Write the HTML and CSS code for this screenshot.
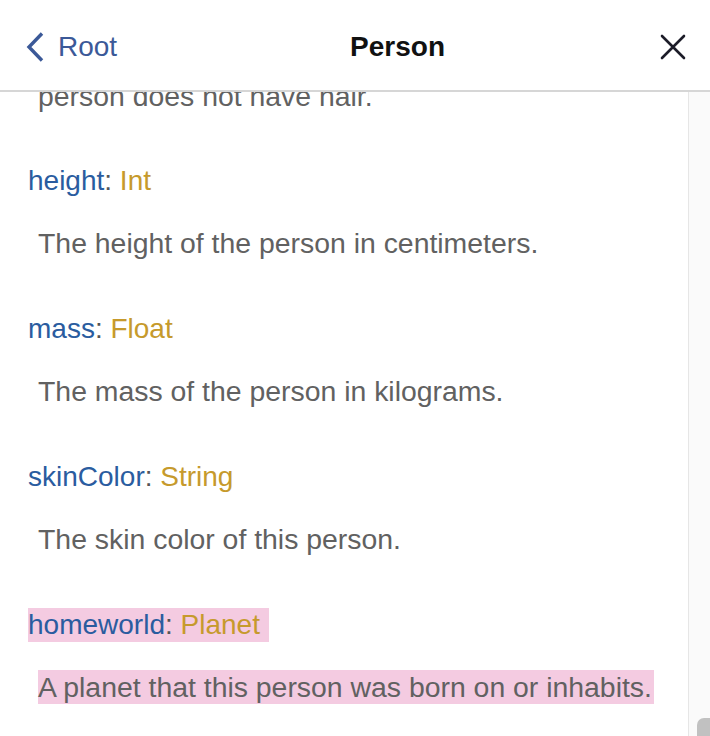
FILE: index.html
```html
<!DOCTYPE html>
<html>
<head>
<meta charset="utf-8">
<link rel="stylesheet" href="styles.css">
</head>
<body>
<div class="panel">
  <div class="titlebar">
    <a class="back">
      <svg class="chev" width="20" height="30" viewBox="0 0 20 30"><path d="M17 1.5 L4 15 L17 28.5" fill="none" stroke="#3b5998" stroke-width="3.4"/></svg>
      <span>Root</span>
    </a>
    <div class="title">Person</div>
    <div class="close">
      <svg width="26" height="26" viewBox="0 0 26 26"><path d="M2 2 L24 24 M24 2 L2 24" stroke="#1c1c28" stroke-width="2.6" stroke-linecap="round"/></svg>
    </div>
  </div>
  <div class="body">
    <div class="content">
      <div class="inner">
        <div class="desc first">person does not have hair.</div>
        <div class="field">
          <div class="fname"><span class="lbl"><span class="fn">height</span><span class="colon">: </span><span class="ty">Int</span></span></div>
          <div class="desc">The height of the person in centimeters.</div>
        </div>
        <div class="field">
          <div class="fname"><span class="lbl"><span class="fn">mass</span><span class="colon">: </span><span class="ty">Float</span></span></div>
          <div class="desc">The mass of the person in kilograms.</div>
        </div>
        <div class="field">
          <div class="fname"><span class="lbl"><span class="fn">skinColor</span><span class="colon">: </span><span class="ty">String</span></span></div>
          <div class="desc">The skin color of this person.</div>
        </div>
        <div class="field hl">
          <div class="fname"><span class="lbl"><span class="fn">homeworld</span><span class="colon">: </span><span class="ty">Planet</span></span></div>
          <div class="desc"><span class="dtext">A planet that this person was born on or inhabits.</span></div>
        </div>
      </div>
    </div>
    <div class="track"><div class="thumb"></div></div>
  </div>
</div>
</body>
</html>
```
FILE: styles.css
```css
html, body {
  margin: 0;
  padding: 0;
  background: #fff;
}
body {
  font-family: "Liberation Sans", Arial, sans-serif;
  width: 710px;
  height: 736px;
  overflow: hidden;
}
.panel {
  display: flex;
  flex-direction: column;
  height: 736px;
}
.titlebar {
  flex: none;
  display: flex;
  align-items: center;
  border-bottom: 2px solid #d6d6d6;
  padding: 4px 24px 0 25px;
  box-sizing: border-box;
  height: 92px;
}
.back {
  display: flex;
  align-items: center;
  color: #3b5998;
  font-size: 28px;
  gap: 13px;
}
.chev { display: block; }
.title {
  flex: 1;
  text-align: center;
  font-size: 28px;
  font-weight: bold;
  color: #111;
  padding-left: 18px;
}
.close {
  display: flex;
  align-items: center;
  width: 26px;
  height: 26px;
}
.close svg { display: block; }
.body {
  flex: 1;
  display: flex;
  overflow: hidden;
}
.content {
  flex: 1;
  overflow: hidden;
  padding-left: 28px;
}
.inner {
  margin-top: -13px;
}
.desc {
  font-size: 28.4px;
  line-height: 34px;
  color: #616161;
  margin-left: 10px;
}
.first { margin-bottom: 51px; }
.field { margin-bottom: 52px; }
.field .desc { margin-top: 28px; }
.fname {
  font-size: 28px;
  line-height: 34px;
}
.lbl { display: inline-block; padding-right: 9px; }
.fn { color: #2a5c9f; }
.colon { color: #555; }
.ty { color: #c69a2c; }
.hl .lbl { background: #f4cbe1; }
.dtext { display: inline-block; }
.hl .dtext { background: #f4cbe1; padding-right: 2px; }
.track {
  width: 21px;
  flex: none;
  background: #fafafa;
  border-left: 1px solid #e6e6e6;
  display: flex;
  flex-direction: column;
}
.thumb {
  margin-top: auto;
  margin-left: 8px;
  height: 18px;
  background: #c1c1c1;
  border-radius: 7px 0 0 0;
}
```
